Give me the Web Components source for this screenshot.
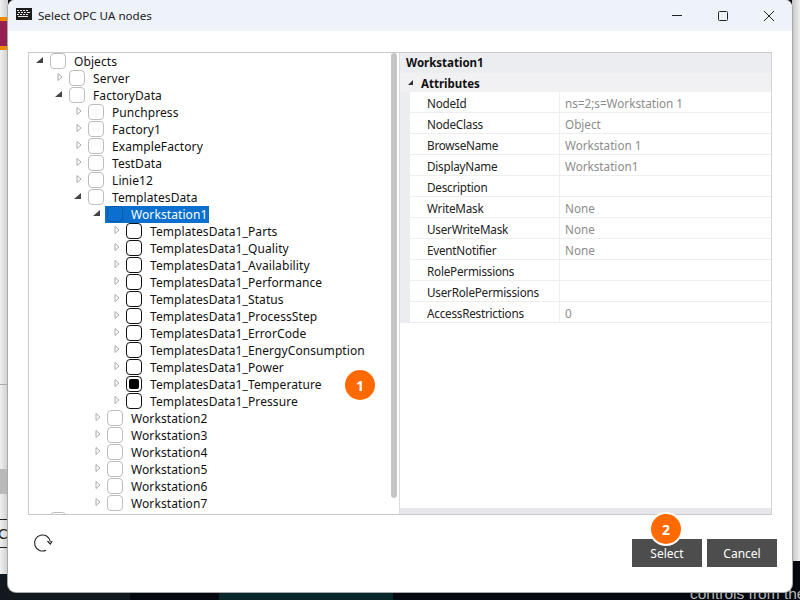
<!DOCTYPE html>
<html>
<head>
<meta charset="utf-8">
<title>Select OPC UA nodes</title>
<style>
  html, body { margin: 0; height: 100%; overflow: hidden; background: #05090f; }
  body { font: 12px 'Noto Sans', 'Open Sans', sans-serif; color: #111; }
</style>
</head>
<body>
<desk-backdrop></desk-backdrop>
<opc-dialog heading="Select OPC UA nodes">
  <tree-node slot="tree" label="Objects" open>
    <tree-node label="Server"></tree-node>
    <tree-node label="FactoryData" open>
      <tree-node label="Punchpress"></tree-node>
      <tree-node label="Factory1"></tree-node>
      <tree-node label="ExampleFactory"></tree-node>
      <tree-node label="TestData"></tree-node>
      <tree-node label="Linie12"></tree-node>
      <tree-node label="TemplatesData" open>
        <tree-node label="Workstation1" open selected>
          <tree-node label="TemplatesData1_Parts" active></tree-node>
          <tree-node label="TemplatesData1_Quality" active></tree-node>
          <tree-node label="TemplatesData1_Availability" active></tree-node>
          <tree-node label="TemplatesData1_Performance" active></tree-node>
          <tree-node label="TemplatesData1_Status" active></tree-node>
          <tree-node label="TemplatesData1_ProcessStep" active></tree-node>
          <tree-node label="TemplatesData1_ErrorCode" active></tree-node>
          <tree-node label="TemplatesData1_EnergyConsumption" active></tree-node>
          <tree-node label="TemplatesData1_Power" active></tree-node>
          <tree-node label="TemplatesData1_Temperature" active checked></tree-node>
          <tree-node label="TemplatesData1_Pressure" active></tree-node>
        </tree-node>
        <tree-node label="Workstation2"></tree-node>
        <tree-node label="Workstation3"></tree-node>
        <tree-node label="Workstation4"></tree-node>
        <tree-node label="Workstation5"></tree-node>
        <tree-node label="Workstation6"></tree-node>
        <tree-node label="Workstation7"></tree-node>
      </tree-node>
    </tree-node>
  </tree-node>
  <tree-node slot="tree" label=""></tree-node>

  <prop-row slot="props" name="NodeId" value="ns=2;s=Workstation 1"></prop-row>
  <prop-row slot="props" name="NodeClass" value="Object"></prop-row>
  <prop-row slot="props" name="BrowseName" value="Workstation 1"></prop-row>
  <prop-row slot="props" name="DisplayName" value="Workstation1"></prop-row>
  <prop-row slot="props" name="Description" value=""></prop-row>
  <prop-row slot="props" name="WriteMask" value="None"></prop-row>
  <prop-row slot="props" name="UserWriteMask" value="None"></prop-row>
  <prop-row slot="props" name="EventNotifier" value="None"></prop-row>
  <prop-row slot="props" name="RolePermissions" value=""></prop-row>
  <prop-row slot="props" name="UserRolePermissions" value=""></prop-row>
  <prop-row slot="props" name="AccessRestrictions" value="0"></prop-row>

  <action-button slot="actions">Select</action-button>
  <action-button slot="actions">Cancel</action-button>

  <step-badge slot="overlay" style="left:337px;top:370px">1</step-badge>
  <step-badge slot="overlay" ring style="left:643px;top:514px">2</step-badge>
</opc-dialog>

<script>
class DeskBackdrop extends HTMLElement {
  constructor() {
    super();
    this.attachShadow({ mode: 'open' }).innerHTML = `
      <style>
        :host { position: absolute; inset: 0; display: block; overflow: hidden; background: #05090f; }
        .left { position: absolute; left: 0; top: 0; width: 8px; height: 574px;
          background: linear-gradient(90deg, #f0f0f0, #cdcdcd); }
        .right { position: absolute; left: 792px; top: 0; width: 8px; height: 561px;
          background: linear-gradient(90deg, #c4c4c4, #efefef); }
        .brand { position: absolute; left: 0; top: 17px; width: 8px; height: 33px; box-sizing: border-box;
          background: #96204f; border-top: 4px solid #f08a00; border-bottom: 4px solid #f08a00; }
        .band { position: absolute; left: 0; top: 469px; width: 8px; height: 25px; background: #b9b9b9; }
        .line { position: absolute; left: 0; width: 8px; height: 1px; background: #222; }
        .faint { background: #a8a8a8; }
        .teal { position: absolute; left: 219px; top: 592px; width: 174px; height: 8px; background: #07272c; }
        .fade { position: absolute; left: 0; top: 574px; width: 130px; height: 26px; background: #12191e; }
        .copy { position: absolute; left: 690px; top: 585px; font: 15.5px 'Liberation Sans', sans-serif;
          color: #b5b8ba; white-space: nowrap; }
        .cut { position: absolute; left: -2px; top: 525px; font: 15px 'Liberation Sans', sans-serif; color: #222; }
      </style>
      <div class="left"></div>
      <div class="brand"></div>
      <div class="line faint" style="top:384px"></div>
      <div class="band"></div>
      <div class="line" style="top:519px"></div>
      <div class="cut">C</div>
      <div class="line" style="top:547px"></div>
      <div class="fade"></div>
      <div class="teal"></div>
      <div class="right"></div>
      <div class="copy">controls from the</div>`;
  }
}

class OpcDialog extends HTMLElement {
  constructor() {
    super();
    this.attachShadow({ mode: 'open' }).innerHTML = `
      <style>
        :host { position: absolute; left: 8px; top: 0; width: 784px; height: 592px; display: flex;
          flex-direction: column; background: #fff; border-radius: 8px; box-shadow: 0 0 0 1px #a9a9a9; overflow: hidden; }
        .bar { height: 31px; flex: none; display: flex; align-items: center; background: #eef2f9; }
        .logo { margin-left: 8px; width: 16px; height: 12px; margin-top: -3px; }
        .heading { margin-left: 6px; flex: 1; white-space: nowrap; color: #1a1a1a; font-size: 11.6px; }
        .ctl { width: 46px; height: 31px; display: flex; align-items: center; justify-content: center; }
        .ctl svg { width: 12px; height: 12px; }
        .panel { margin: 21px 20px 0; height: 463px; box-sizing: border-box; border: 1px solid #c9c9c9;
          border-right-color: #d4d4d4; display: flex; flex: none; }
        .tree { flex: none; width: 362px; height: 461px; overflow: hidden; padding-left: 4px; box-sizing: border-box; }
        .track { width: 8px; flex: none; }
        .thumb { width: 6px; height: 445px; background: #c6c6c6; border-radius: 3px; }
        .split { width: 1px; flex: none; background: #dcdcdc; }
        .props { flex: 1; display: flex; flex-direction: column; min-width: 0; }
        .title { height: 20px; flex: none; line-height: 19px; padding-left: 6px; font-weight: 700; font-size: 11.5px; color: #111;
          background: #ecedf1; }
        .cat { height: 19px; flex: none; display: flex; align-items: center; background: #f1f1f4; font-weight: 700; font-size: 11.5px; color: #111; }
        .cat span { margin-top: 2px; }
        .cat svg { width: 21px; height: 19px; flex: none; }
        .grid { flex: 1; display: flex; flex-direction: column; }
        .grid slot { display: block; }
        .strip { height: 6px; flex: none; background: #e6e6ed; }
        .foot { flex: 1; display: flex; align-items: flex-start; padding: 24px 15px 0 26px; }
        .foot svg { width: 18px; height: 18px; margin-top: -5px; overflow: visible; }
        .actions { margin-left: auto; display: flex; gap: 5px; }
      </style>
      <div class="bar">
        <svg class="logo" viewBox="0 0 16 12">
          <rect width="16" height="12" fill="#1c1c1c"/>
          <g fill="#e8e8e8">
            <rect x="1" y="2" width="2" height="1"/><rect x="4" y="2" width="2" height="1"/><rect x="7" y="2" width="2" height="1"/><rect x="10" y="2" width="2" height="1"/>
            <rect x="2" y="4" width="2" height="1"/><rect x="5" y="4" width="2" height="1"/><rect x="8" y="4" width="2" height="1"/><rect x="11" y="4" width="3" height="1"/>
            <rect x="1" y="6" width="2" height="1"/><rect x="4" y="6" width="2" height="1"/><rect x="7" y="6" width="2" height="1"/><rect x="10" y="6" width="2" height="1"/>
            <rect x="2" y="8" width="10" height="1"/>
          </g>
        </svg>
        <span class="heading"></span>
        <div class="ctl"><svg viewBox="0 0 12 12"><path d="M1 5.5h10" stroke="#222" fill="none"/></svg></div>
        <div class="ctl"><svg viewBox="0 0 12 12"><rect x="1.5" y="1.5" width="9" height="9" rx="1" stroke="#222" fill="none"/></svg></div>
        <div class="ctl"><svg viewBox="0 0 12 12"><path d="M1 1l10 10M11 1L1 11" stroke="#222" fill="none"/></svg></div>
      </div>
      <div class="panel">
        <div class="tree"><slot name="tree"></slot></div>
        <div class="track"><div class="thumb"></div></div>
        <div class="split"></div>
        <div class="props">
          <div class="title">Workstation1</div>
          <div class="cat">
            <svg viewBox="0 0 21 19"><path d="M13 7v5H8z" fill="#333"/></svg>
            <span>Attributes</span>
          </div>
          <div class="grid"><slot name="props"></slot></div>
          <div class="strip"></div>
        </div>
      </div>
      <div class="foot">
        <svg viewBox="0 0 18 18"><path d="M12 16.2A8 8 0 1 1 16.4 7.8" fill="none" stroke="#222" stroke-width="1.1"/><path d="M13.4 7l2.9 3 1.9-3" fill="none" stroke="#222" stroke-width="1.1"/></svg>
        <div class="actions"><slot name="actions"></slot></div>
      </div>
      <slot name="overlay"></slot>`;
    this.shadowRoot.querySelector('.heading').textContent = this.getAttribute('heading');
  }
}

class TreeNode extends HTMLElement {
  constructor() {
    super();
    this.attachShadow({ mode: 'open' }).innerHTML = `
      <style>
        :host { display: block; }
        .row { height: 17px; display: flex; align-items: flex-start; white-space: nowrap; }
        .exp { width: 14px; height: 17px; flex: none; }
        .item { display: flex; height: 17px; margin-left: 1px; padding: 0 2px; color: #111; }
        .box { width: 16px; height: 16px; box-sizing: border-box; flex: none; border: 1px solid #bdbdbd;
          border-radius: 4px; background: #fff; display: flex; align-items: center; justify-content: center; }
        .lbl { margin-left: 8px; line-height: 17px; letter-spacing: .09px; }
        :host([active]) .box { border-color: #111; }
        :host([checked]) .box::after { content: ''; width: 10px; height: 10px; border-radius: 2px; background: #000; }
        :host([selected]) .item { background: #0a6fcf; color: #fff; }
        :host([selected]) .box { background: #0a6fcf; border-color: #0b5aa5; }
        .kids { padding-left: 19px; display: none; }
        :host([open]) .kids { display: block; }
      </style>
      <div class="row">
        <svg class="exp" viewBox="0 0 14 17"></svg>
        <div class="item"><span class="box"></span><span class="lbl"></span></div>
      </div>
      <div class="kids"><slot></slot></div>`;
  }

  connectedCallback() {
    this.shadowRoot.querySelector('.lbl').textContent = this.getAttribute('label');
    this.shadowRoot.querySelector('.exp').innerHTML = this.hasAttribute('open')
      ? '<path d="M10 4v6H3z" fill="#444"/>'
      : '<path d="M6 3.5L10 7l-4 3.5z" fill="#fff" stroke="#aaa"/>';
  }
}

class PropRow extends HTMLElement {
  constructor() {
    super();
    this.attachShadow({ mode: 'open' }).innerHTML = `
      <style>
        :host { display: flex; height: 21px; box-sizing: border-box; background: #fff; }
        .gut { width: 10px; flex: none; background: #ecedf1; }
        .name, .val { box-sizing: border-box; height: 21px; padding-top: 1px; line-height: 20px;
          white-space: nowrap; box-shadow: inset 0 -1px 0 #eeeeee; }
        .name { width: 150px; flex: none; padding-left: 17px; color: #222; font-size: 11.7px; letter-spacing: -.22px;
          border-right: 1px solid #eeeeee; }
        .val { flex: 1; padding-left: 5px; color: #8c8c8c; font-size: 11.7px; }
      </style>
      <div class="gut"></div><div class="name"></div><div class="val"></div>`;
  }

  connectedCallback() {
    this.shadowRoot.querySelector('.name').textContent = this.getAttribute('name');
    this.shadowRoot.querySelector('.val').textContent = this.getAttribute('value');
  }
}

class ActionButton extends HTMLElement {
  constructor() {
    super();
    this.attachShadow({ mode: 'open' }).innerHTML = `
      <style>
        :host { display: flex; align-items: center; justify-content: center; width: 70px; height: 28px;
          background: #4d4d4d; color: #fff; }
      </style>
      <slot></slot>`;
  }
}

class StepBadge extends HTMLElement {
  constructor() {
    super();
    this.attachShadow({ mode: 'open' }).innerHTML = `
      <style>
        :host { position: absolute; width: 30px; height: 30px; box-sizing: border-box; border-radius: 50%;
          background: #ff6a00; color: #fff; font-weight: 700; font-size: 14px; display: flex;
          align-items: center; justify-content: center; }
        :host([ring]) { box-shadow: 0 0 0 2px #fff; }
      </style>
      <slot></slot>`;
  }
}

customElements.define('desk-backdrop', DeskBackdrop);
customElements.define('opc-dialog', OpcDialog);
customElements.define('tree-node', TreeNode);
customElements.define('prop-row', PropRow);
customElements.define('action-button', ActionButton);
customElements.define('step-badge', StepBadge);
</script>
</body>
</html>
